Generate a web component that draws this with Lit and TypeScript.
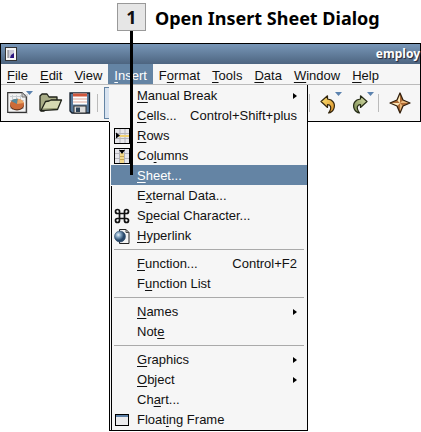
import { LitElement, html, css, svg, nothing } from "lit";
import { customElement } from "lit/decorators.js";
import { classMap } from "lit/directives/class-map.js";

interface Item {
  label: string;
  key: number;
  accel?: string;
  sub?: boolean;
  icon?: unknown;
  active?: boolean;
}

const mnemonic = (label: string, key: number) =>
  html`<span>${label.slice(0, key)}<u>${label[key]}</u>${label.slice(key + 1)}</span>`;

const rowsIcon = html`<svg width="16" height="16" viewBox="0 0 16 16">
  <rect x=".5" y=".5" width="15" height="15" fill="#e6e6ea" stroke="#000"/>
  <path d="M1 5.500H15M1 10.500H15M6 1V15M11 1V15" stroke="#b4b4ba" fill="none"/>
  <rect x="5" y="7" width="10" height="2" fill="#f0d070"/>
  <path d="M2 4.500L6 7.500L2 10.500z" fill="#000"/></svg>`;
const colsIcon = html`<svg width="16" height="16" viewBox="0 0 16 16">
  <rect x=".5" y=".5" width="15" height="15" fill="#e6e6ea" stroke="#000"/>
  <path d="M1 5.500H15M1 10.500H15M5.500 1V15M10.500 1V15" stroke="#b4b4ba" fill="none"/>
  <rect x="6" y="5" width="4" height="10" fill="#f3d98a"/><path d="M6 8.500H10M6 11.500H10" stroke="#c8a850"/>
  <path d="M5 2H11L8 6z" fill="#000"/></svg>`;
const charIcon = html`<svg width="16" height="16" viewBox="0 0 16 16">
  <path d="M5.500 5.500H10.500V10.500H5.500zM5.500 5.500H3.500A2 2 0 1 1 5.500 3.500zM10.500 5.500V3.500A2 2 0 1 1 12.500 5.500zM10.500 10.500H12.500A2 2 0 1 1 10.500 12.500zM5.500 10.500V12.500A2 2 0 1 1 3.500 10.500z" fill="none" stroke="#111" stroke-width="1.700"/></svg>`;
const linkIcon = html`<svg width="17" height="17" viewBox="0 0 17 17">
  <defs><radialGradient id="globe" cx=".35" cy=".35"><stop offset="0" stop-color="#e6f2fa"/><stop offset=".5" stop-color="#7a9cba"/><stop offset="1" stop-color="#29486a"/></radialGradient></defs>
  <path d="M5.500 1.500H12L15 4.500V15.500H5.500z" fill="#f4f4f4" stroke="#222"/><path d="M12 1.500V4.500H15" fill="none" stroke="#444"/>
  <circle cx="6" cy="8.500" r="5.500" fill="url(#globe)" stroke="#34516d" stroke-width=".6"/></svg>`;
const frameIcon = html`<svg width="16" height="16" viewBox="0 0 16 16">
  <rect x="1.500" y="2.500" width="13" height="11" fill="#ececee" stroke="#000"/><path d="M2 4H14" stroke="#5b7fa6" stroke-width="2"/></svg>`;

const groups: Item[][] = [
  [
    { label: "Manual Break", key: 0, sub: true },
    { label: "Cells...", key: 0, accel: "Control+Shift+plus" },
    { label: "Rows", key: 0, icon: rowsIcon },
    { label: "Columns", key: 2, icon: colsIcon },
    { label: "Sheet...", key: 0, active: true },
    { label: "External Data...", key: 1 },
    { label: "Special Character...", key: 1, icon: charIcon },
    { label: "Hyperlink", key: 0, icon: linkIcon },
  ],
  [
    { label: "Function...", key: 0, accel: "Control+F2" },
    { label: "Function List", key: 1 },
  ],
  [
    { label: "Names", key: 0, sub: true },
    { label: "Note", key: 3 },
  ],
  [
    { label: "Graphics", key: 0, sub: true },
    { label: "Object", key: 0, sub: true },
    { label: "Chart...", key: 2 },
    { label: "Floating Frame", key: 5, icon: frameIcon },
  ],
];

@customElement("insert-menu")
export class InsertMenu extends LitElement {
  static styles = css`
    :host { display: block; box-sizing: border-box; padding-left: 2px; background: #f6f6f6; border: solid #000; border-width: 0 1px 1px 0; }
    :host::before, :host::after { content: ""; position: absolute; bottom: 0; width: 1px; background: #000; }
    :host::before { left: 0; top: 37px; }
    :host::after { left: 2px; top: 101px; }
    .rule { height: 1px; border: 0; margin: 4px 3px 3px; background: #aaa; }
    .item { display: flex; align-items: center; width: 100%; height: 20px; padding: 2px 10px 0 3px; border: 0; background: none; color: #111; font: inherit; text-align: left; white-space: nowrap; }
    .active { background: #6484a4; color: #fff; }
    .icon { display: flex; width: 23px; flex: none; }
    .end { margin-left: auto; display: flex; }
    .list { padding-bottom: 1px; }
    u { text-underline-offset: 2px; text-decoration-thickness: 1px; text-decoration-skip-ink: none; }
  `;
  render() {
    return html`<div class="list" role="menu">
      ${groups.map((g, i) => html`${i ? html`<hr class="rule" />` : nothing}
        ${g.map((it) => html`<button role="menuitem" class=${classMap({ item: true, active: !!it.active })}>
          <span class="icon">${it.icon ?? nothing}</span>${mnemonic(it.label, it.key)}
          ${it.accel ? html`<span class="end">${it.accel}</span>` : nothing}
          ${it.sub ? html`<span class="end"><svg width="4" height="6" viewBox="0 0 4 6"><path d="M0 0L4 3L0 6z" fill="#000"/></svg></span>` : nothing}
        </button>`)}`)}
    </div>`;
  }
}

const drop = svg`<path d="M19 0H26L22.500 4z" fill="#5b82ae"/>`;

const newIcon = html`<svg width="26" height="24" viewBox="0 0 26 24">
  <path d="M2 3H21V23H2z" fill="#bbb" opacity=".5"/>
  <path d="M.7 1.700H15L19.300 6V21.300H.7z" fill="#f2f2f2" stroke="#333" stroke-width="1.200"/>
  <path d="M15 1.700V6H19" fill="#ccc" stroke="#777"/>
  <path d="M3 5.500H13M3 9.500H17M3 13.500H17M3 17.500H17M5.500 4V19M9.500 4V19M13.500 4V19" stroke="#c9ced2"/>
  <ellipse cx="10" cy="14.500" rx="7" ry="5" fill="#63351f"/><ellipse cx="10" cy="13" rx="7" ry="5.200" fill="#cc6b38"/>
  <path d="M10 13L4 10Q6.500 7.500 11 7.800z" fill="#52899c"/><path d="M10 13L11 7.800Q16 8.500 17 12z" fill="#e9a566"/>${drop}</svg>`;
const openIcon = html`<svg width="24" height="20" viewBox="0 0 24 20">
  <path d="M1 17V3L3 1H8L10 4H18V8L5 18H2z" fill="#a8ac86" stroke="#20231a" stroke-width="1.300" stroke-linejoin="round"/>
  <path d="M2 17.500L6.500 8.500L10 8L12 7H22.500L18.500 16.500z" fill="#d5d8b2" stroke="#20231a" stroke-width="1.300" stroke-linejoin="round"/>
  <path d="M4 16L18 15.500" stroke="#8f946c"/></svg>`;
const saveIcon = html`<svg width="22" height="22" viewBox="0 0 22 22">
  <path d="M1 1H20.500V21H3L1 19z" fill="#58799b" stroke="#16212e" stroke-width="1.300"/>
  <rect x="4" y="1.500" width="14" height="11" fill="#fff"/><rect x="4" y="1.500" width="14" height="3" fill="#d0553b"/>
  <path d="M4 7H18M4 10H18" stroke="#dba79a"/>
  <rect x="5" y="14" width="12" height="7" fill="#dcdcdc" stroke="#333"/><rect x="7" y="15.500" width="4" height="4.500" fill="#2d4358"/></svg>`;

const arrowPath = "M1 6.500L7.500 .8V4C13 4.500 16 9 13.500 14.500Q12 17.500 8.500 18Q11.500 14 10.500 11.500Q9.700 9.600 7.500 9.700V12.500z";
const undoIcon = html`<svg width="22" height="22" viewBox="-4 0 22 22">
  <defs><linearGradient id="gold" x2="1" y2="1"><stop stop-color="#ffe87a"/><stop offset="1" stop-color="#d98b22"/></linearGradient></defs>
  <g transform="translate(-4 3)"><path d=${arrowPath} fill="url(#gold)" stroke="#33260e" stroke-width="1.200" stroke-linejoin="round"/></g>
  <path d="M11 0H18L14.500 4z" fill="#5b82ae"/></svg>`;
const redoIcon = html`<svg width="22" height="22" viewBox="-4 0 22 22">
  <defs><linearGradient id="moss" x2="1" y2="1"><stop stop-color="#dde5ae"/><stop offset="1" stop-color="#74844a"/></linearGradient></defs>
  <g transform="translate(12 3) scale(-1 1)"><path d=${arrowPath} fill="url(#moss)" stroke="#252b16" stroke-width="1.200" stroke-linejoin="round"/></g>
  <path d="M11 0H18L14.500 4z" fill="#5b82ae"/></svg>`;
const starIcon = html`<svg width="22" height="22" viewBox="0 0 22 22">
  <path d="M11 1L14 8L21 11L14 14L11 21L8 14L1 11L8 8z" fill="#eab678"/>
  <path d="M11 11V1L14 8zM11 11H21L14 14zM11 11V21L8 14zM11 11H1L8 8z" fill="#ae6a34"/>
  <path d="M11 11V1L8 8zM11 11H1L8 14z" fill="#fbe6b8"/>
  <path d="M11 1L14 8L21 11L14 14L11 21L8 14L1 11L8 8z" fill="none" stroke="#33200e" stroke-width="1.300" stroke-linejoin="round"/></svg>`;

const menus: [string, number][] = [["File", 0], ["Edit", 0], ["View", 0], ["Insert", 0], ["Format", 1], ["Tools", 0], ["Data", 0], ["Window", 0], ["Help", 0]];

@customElement("app-root")
export class AppRoot extends LitElement {
  static styles = css`
    :host { display: block; position: relative; min-height: 100vh; background: #fff; font: 13px/20px "Liberation Sans", Arial, sans-serif; color: #111; }
    .caption { display: flex; align-items: center; gap: 9px; padding: 3px 0 12px 117px; }
    .badge { box-sizing: border-box; width: 29px; height: 28px; border: 1px solid #999; background: #e6e6e6; text-align: center; font: bold 18px/26px "Noto Sans", sans-serif; }
    .title { margin: 0; font: bold 18px/30px "Noto Sans", sans-serif; height: 28px; color: #000; white-space: nowrap; }
    .window { border: 1px solid #000; background: #f6f6f6; }
    .titlebar { display: flex; align-items: center; justify-content: space-between; height: 20px; padding-left: 4px; background: linear-gradient(#7897b8, #4d6580); }
    .name { color: #fff; font: bold 12px/20px "Noto Sans", sans-serif; text-shadow: 1px 1px 1px #223; white-space: nowrap; }
    .menubar { display: flex; height: 20px; border-bottom: 1px solid #bbb; }
    .top { height: 20px; padding: 2px 6px 0; border: 0; background: none; color: inherit; font: inherit; }
    .on { background: #6484a4; color: #fff; }
    .tools { display: flex; align-items: center; justify-content: space-between; height: 36px; padding: 0 9px 0 6px; }
    .set { display: flex; align-items: center; gap: 6px; }
    .tight { gap: 4px; }
    .wide { gap: 10px; }
    .tool { display: flex; padding: 0; border: 0; background: none; }
    .pressed { box-sizing: border-box; width: 30px; height: 32px; border: 1px solid #6484a4; background: #d8e3f0; }
    .bar { width: 1px; height: 18px; background: #bbb; }
    .menu { position: absolute; left: 109px; top: 85px; width: 199px; }
    .pointer { position: absolute; left: 130px; top: 31px; width: 3px; height: 144px; background: #000; }
    u { text-underline-offset: 2px; text-decoration-thickness: 1px; text-decoration-skip-ink: none; }
  `;
  render() {
    return html`
      <div class="caption"><span class="badge">1</span><h1 class="title">Open Insert Sheet Dialog</h1></div>
      <main class="window">
        <div class="titlebar">
          <svg width="13" height="15" viewBox="0 0 13 15"><rect x=".5" y=".5" width="11" height="13" fill="#f7f7f7" stroke="#333"/><path d="M3 3H9V11H3z" fill="#c9c9d8"/><path d="M3 3V11" stroke="#777"/><path d="M6 8L9 6V11H5z" fill="#2d1680"/></svg>
          <span class="name">employ</span>
        </div>
        <nav class="menubar">${menus.map(([l, k]) => html`<button class=${classMap({ top: true, on: l === "Insert" })}>${mnemonic(l, k)}</button>`)}</nav>
        <div class="tools">
          <div class="set">
            <button class="tool" aria-label="New">${newIcon}</button>
            <button class="tool" aria-label="Open">${openIcon}</button>
            <button class="tool" aria-label="Save">${saveIcon}</button>
            <span class="bar"></span>
            <button class="tool pressed" aria-label="Edit file"></button>
          </div>
          <div class="set tight">
            <div class="set wide">
              <span class="bar"></span>
              <button class="tool" aria-label="Undo">${undoIcon}</button>
              <button class="tool" aria-label="Redo">${redoIcon}</button>
            </div>
            <div class="set wide">
              <span class="bar"></span>
              <button class="tool" aria-label="Navigator">${starIcon}</button>
            </div>
          </div>
        </div>
      </main>
      <insert-menu class="menu"></insert-menu>
      <div class="pointer"></div>`;
  }
}
